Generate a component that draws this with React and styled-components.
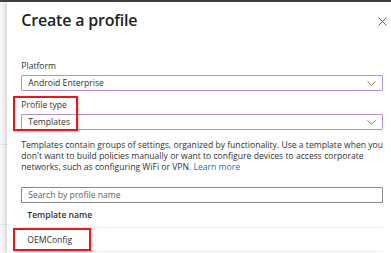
import React from "react";
import styled, { createGlobalStyle } from "styled-components";

const GlobalStyle = createGlobalStyle`
  html, body {
    margin: 0;
    padding: 0;
    background: #ffffff;
  }
  body {
    font-family: "Open Sans", "Noto Sans", sans-serif;
    color: #323130;
  }
`;

function Chevron() {
  return (
    <svg width="9" height="5" viewBox="0 0 9 5">
      <path d="M0.5 0.5 L4.5 4.3 L8.5 0.5" fill="none" stroke="#797775" strokeWidth="0.9" />
    </svg>
  );
}

function CloseIcon() {
  return (
    <svg width="9" height="9" viewBox="0 0 9 9">
      <path d="M0.5 0.5 L8.5 8.5 M8.5 0.5 L0.5 8.5" stroke="#605e5c" strokeWidth="1" />
    </svg>
  );
}

export default function App() {
  return (
    <>
      <GlobalStyle />
      <Frame>
        <BackStrip>
          <BackRow $h={143} />
          <BackRow $h={80} />
        </BackStrip>
        <Panel>
          <Header>
            <Title>Create a profile</Title>
            <CloseButton>
              <CloseIcon />
            </CloseButton>
          </Header>

          <Field>
            <Label>Platform</Label>
            <Select>
              <span>Android Enterprise</span>
              <Chevron />
            </Select>
          </Field>

          <Field $marked>
            <Label>Profile type</Label>
            <Select>
              <span>Templates</span>
              <Chevron />
            </Select>
            <Highlight $left={-8} $top={-3} $w={65} $h={35} />
          </Field>

          <Description>
            Templates contain groups of settings, organized by functionality. Use a template when you
            <br />
            don't want to build policies manually or want to configure devices to access corporate
            <br />
            networks, such as configuring WiFi or VPN. <LearnMore>Learn more</LearnMore>
          </Description>

          <Search>Search by profile name</Search>

          <Table>
            <HeadRow>Template name</HeadRow>
            <Row>
              OEMConfig
              <Highlight $left={-8} $top={0} $w={78} $h={23} />
            </Row>
          </Table>
        </Panel>
      </Frame>
    </>
  );
}

const Frame = styled.div`
  display: flex;
  height: 251px;
  border-top: 2px solid #3e3e3e;
  overflow: hidden;
`;

const BackStrip = styled.div`
  width: 8px;
  background: #f6f6f6;
  display: flex;
  flex-direction: column;
`;

const BackRow = styled.div`
  height: ${(p) => p.$h}px;
  border-bottom: 1px solid #e4e4e4;
  box-sizing: border-box;
`;

const Panel = styled.div`
  flex: 1;
  background: #ffffff;
  box-shadow: -2px 0 4px rgba(0, 0, 0, 0.14);
  padding: 0 8px 0 14px;
  display: flex;
  flex-direction: column;
  position: relative;
`;

const Header = styled.div`
  display: flex;
  justify-content: space-between;
  align-items: flex-start;
  height: 58px;
  padding-top: 7px;
  box-sizing: border-box;
`;

const Title = styled.h1`
  margin: 0;
  font-size: 16px;
  font-weight: 600;
  line-height: 22px;
  letter-spacing: -0.2px;
  color: #201f1e;
`;

const CloseButton = styled.div`
  margin-top: 8px;
  margin-right: -4px;
  display: flex;
`;

const Field = styled.div`
  position: relative;
  margin-bottom: ${(p) => (p.$marked ? 7 : 8)}px;
`;

const Label = styled.div`
  font-size: 8.6px;
  line-height: 12px;
  margin-bottom: 3px;
  color: #323130;
`;

const Select = styled.div`
  height: 16px;
  box-sizing: border-box;
  border: 1px solid #b58fd4;
  border-radius: 1px;
  display: flex;
  align-items: center;
  justify-content: space-between;
  padding: 0 6px 0 6px;
  font-size: 8.6px;
  color: #323130;
`;

const Highlight = styled.div`
  position: absolute;
  left: ${(p) => p.$left}px;
  top: ${(p) => p.$top}px;
  width: ${(p) => p.$w}px;
  height: ${(p) => p.$h}px;
  border: 2px solid #e3191f;
  box-sizing: border-box;
  box-shadow: 1px 1px 2px rgba(0, 0, 0, 0.25);
`;

const Description = styled.p`
  margin: 3px 0 0 0;
  font-size: 8.6px;
  line-height: 11px;
  color: #323130;
  white-space: nowrap;
`;

const LearnMore = styled.span`
  color: #0078d4;
`;

const Search = styled.div`
  margin-top: 14px;
  height: 16px;
  box-sizing: border-box;
  border: 1px solid #8a8886;
  border-radius: 1px;
  padding: 0 6px;
  display: flex;
  align-items: center;
  font-size: 8.6px;
  color: #605e5c;
`;

const Table = styled.div`
  display: flex;
  flex-direction: column;
`;

const HeadRow = styled.div`
  height: 24px;
  display: flex;
  align-items: center;
  padding-left: 6px;
  font-size: 8.6px;
  font-weight: 600;
  border-bottom: 1px solid #edebe9;
`;

const Row = styled.div`
  position: relative;
  height: 23px;
  display: flex;
  align-items: center;
  padding-left: 6px;
  font-size: 8.6px;
  border-bottom: 1px solid #edebe9;
`;
